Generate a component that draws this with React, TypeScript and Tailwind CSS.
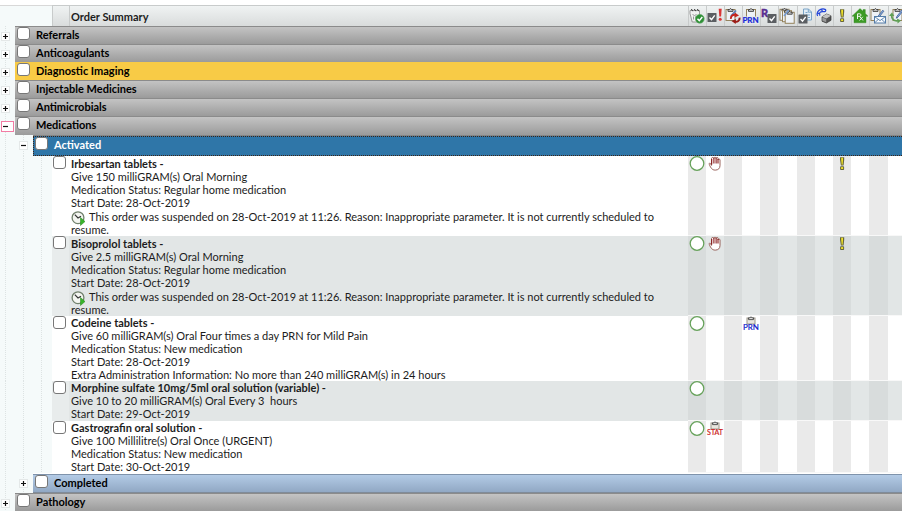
import React from 'react';

type Flag = 'verify' | 'hand' | 'prn' | 'stat' | 'alert';

interface Order {
  id: string;
  name: string;
  lines: string[];
  suspended?: string;
  flags: Partial<Record<number, Flag>>;
}

const SUSPENDED =
  'This order was suspended on 28-Oct-2019 at 11:26. Reason: Inappropriate parameter. It is not currently scheduled to resume.';

const ORDERS: Order[] = [
  {
    id: 'irbesartan',
    name: 'Irbesartan tablets -',
    lines: ['Give 150 milliGRAM(s) Oral Morning', 'Medication Status: Regular home medication', 'Start Date: 28-Oct-2019'],
    suspended: SUSPENDED,
    flags: { 0: 'verify', 1: 'hand', 8: 'alert' },
  },
  {
    id: 'bisoprolol',
    name: 'Bisoprolol tablets -',
    lines: ['Give 2.5 milliGRAM(s) Oral Morning', 'Medication Status: Regular home medication', 'Start Date: 28-Oct-2019'],
    suspended: SUSPENDED,
    flags: { 0: 'verify', 1: 'hand', 8: 'alert' },
  },
  {
    id: 'codeine',
    name: 'Codeine tablets -',
    lines: [
      'Give 60 milliGRAM(s) Oral Four times a day PRN for Mild Pain',
      'Medication Status: New medication',
      'Start Date: 28-Oct-2019',
      'Extra Administration Information: No more than 240 milliGRAM(s) in 24 hours',
    ],
    flags: { 0: 'verify', 3: 'prn' },
  },
  {
    id: 'morphine',
    name: 'Morphine sulfate 10mg/5ml oral solution (variable) -',
    lines: ['Give 10 to 20 milliGRAM(s) Oral Every 3\u00a0 hours', 'Start Date: 29-Oct-2019'],
    flags: { 0: 'verify' },
  },
  {
    id: 'gastrografin',
    name: 'Gastrografin oral solution -',
    lines: ['Give 100 Millilitre(s) Oral Once (URGENT)', 'Medication Status: New medication', 'Start Date: 30-Oct-2019'],
    flags: { 0: 'verify', 1: 'stat' },
  },
];

const Svg: React.FC<{ children: React.ReactNode }> = ({ children }) => (
  <svg viewBox="0 0 16 16" width="16" height="16" fill="none" className="block shrink-0 overflow-visible">
    {children}
  </svg>
);

const Clipboard = ({ x = 0, y = 0 }: { x?: number; y?: number }) => (
  <g transform={`translate(${x} ${y})`}>
    <rect x="0.5" y="1.5" width="9" height="11" fill="#eef2f7" stroke="#94825c" />
    <path d="M2.5 3.4V1.5H4L5 .4l1 1.1h1.5v1.9z" fill="#c9c9c9" stroke="#3c3c3c" strokeWidth=".9" />
  </g>
);

const Tick = ({ x, y }: { x: number; y: number }) => (
  <g transform={`translate(${x} ${y})`}>
    <rect width="9" height="9" rx=".6" fill="#5b5e62" />
    <path d="M2 4.6l2 2 3.2-4.2" stroke="#fff" strokeWidth="1.4" />
  </g>
);

const Pen = () => <path d="M12.8 2.2L8 8.2l-.8 2 1.8-1 4.8-6z" fill="#8fb0e0" stroke="#3c5d96" strokeWidth=".8" />;

const Bang = () => (
  <>
    <path d="M6 1.2h4.2v2.6L9.6 9.6H6.9L6 3.8z" fill="#66653a" />
    <path d="M7.2 1.8h1.8v2.2l-.4 4.8h-.9l-.5-4.8z" fill="#f0e228" />
    <rect x="6.1" y="10.3" width="4" height="3.7" rx=".8" fill="#66653a" />
    <rect x="7.1" y="11.1" width="2" height="1.9" fill="#f0e228" />
  </>
);

const HEADER_ICONS: { label: string; art: React.ReactNode }[] = [
  {
    label: 'Verification',
    art: (
      <>
        <path d="M1 2.5h9.5V14H3.2L1 5.5z" fill="#f1f1f1" stroke="#8e8e8e" strokeWidth=".9" />
        <path d="M2.4 1l1.3 2.2M5.4 1l1.3 2.2M8.4 1l1.3 2.2" stroke="#333" />
        <path d="M3.5 6l2 2 2-2M4.5 8.5v3M7 8v2" stroke="#999" />
        <circle cx="10.8" cy="10.8" r="4.4" fill="#2f9037" stroke="#58a65d" strokeWidth=".6" />
        <path d="M8.5 10.8l1.8 1.9 3-3.6" stroke="#fff" strokeWidth="1.5" />
      </>
    ),
  },
  {
    label: 'Priority',
    art: (
      <>
        <Tick x={0.5} y={5} />
        <path d="M11.7.8h3l-.6 7.6h-1.8z" fill="#d93636" />
        <circle cx="13.2" cy="11.2" r="1.5" fill="#d93636" />
      </>
    ),
  },
  {
    label: 'Renewal',
    art: (
      <>
        <Clipboard x={0.5} />
        <path d="M11 2.5L6 8.2" stroke="#5c82bd" strokeWidth="1.8" />
        <path d="M5.9 10.8c-.3-3 2.2-4.7 4.8-3.9" stroke="#c4241d" strokeWidth="2" />
        <path d="M9.8 4.4l4.2 3-4.4 2z" fill="#c4241d" />
        <path d="M14.6 9.6c.3 3-2.2 4.7-4.8 3.9" stroke="#9c1c17" strokeWidth="2" />
        <path d="M10.7 16l-4.2-3 4.4-2z" fill="#9c1c17" />
      </>
    ),
  },
  {
    label: 'PRN',
    art: (
      <>
        <Clipboard x={3} />
        <rect y="8.5" width="16" height="7.5" fill="#e4e7e7" />
        <text x="7.5" y="15" textAnchor="middle" fontSize="8" fontFamily="Lato, sans-serif" fill="#1527d8" stroke="#1527d8" strokeWidth=".2">
          PRN
        </text>
      </>
    ),
  },
  {
    label: 'Reconciliation',
    art: (
      <>
        <text x="0" y="9" fontSize="11" fontWeight="900" fontFamily="Lato, sans-serif" fill="#592f91" stroke="#592f91" strokeWidth=".4">
          R
        </text>
        <Tick x={6.5} y={6} />
      </>
    ),
  },
  {
    label: 'Order set',
    art: (
      <>
        <Clipboard x={0.5} y={-0.2} />
        <Clipboard x={3} y={1.2} />
        <Clipboard x={5.7} y={2.8} />
        <path d="M9.8 2L5 8" stroke="#7399d0" strokeWidth="1.6" />
      </>
    ),
  },
  {
    label: 'Documents',
    art: (
      <>
        <path d="M5.5 1h5l3 3v8h-8z" fill="#e2edf6" stroke="#7ba5c8" />
        <path d="M10.3 1v3.2h3.2M7.5 4.5h2M8 7h4M10 9.5h2" stroke="#7ba5c8" />
        <Tick x={0.5} y={6.5} />
      </>
    ),
  },
  {
    label: 'Dispensing',
    art: (
      <>
        <path d="M1.6 8C0 5.500 2 2.200 5.200 1.200c3.400-.8 5.400.7 4.200 2-1.300 1.200-3.600-.6-5.400 1.200-1 1-.6 2.200 0 3.200M2 5.200l2 1M5.600 1.400l.8 2" stroke="#2344d8" strokeWidth="1.3" />
        <path d="M6 8.800l4.600-2.800L15 7.800v4.500l-4.600 2.700L6 13.200z" fill="#555" stroke="#333" strokeWidth=".7" />
        <path d="M6 8.800l4.600-2.800L15 7.800l-4.600 2.700z" fill="#c4c4c4" />
        <path d="M6.400 9.600l3.800 1.400v3.300l-3.800-1.500z" fill="#999" />
      </>
    ),
  },
  { label: 'Alerts', art: <Bang /> },
  {
    label: 'Home medication',
    art: (
      <>
        <path d="M8 .6l3 2.7V1.6h2.3v3.9L16 8.2h-2v6.6H2V8.2H0z" fill="#3c9b25" stroke="#318020" strokeWidth=".4" />
        <path d="M5.5 11V5.8h2.2c1.8 0 1.8 2.5 0 2.5H5.5M7.5 8.3l3.5 4.2M10.8 8.8l-3.2 3.7" stroke="#fff" strokeWidth=".9" />
      </>
    ),
  },
  {
    label: 'Messages',
    art: (
      <>
        <Clipboard x={0.5} />
        <Pen />
        <rect x="4.5" y="8.5" width="11" height="6.5" fill="#f7fafd" stroke="#557da9" />
        <path d="M4.8 8.8L10 12.6l5.2-3.8M4.8 14.7l3.4-3.2M15.2 14.7l-3.4-3.2" stroke="#557da9" strokeWidth=".9" />
      </>
    ),
  },
  {
    label: 'Modify',
    art: (
      <>
        <Clipboard x={3.5} />
        <Pen />
        <path d="M2.6 7.2c-.4 4 2.6 6.2 6.2 5.6" stroke="#5fa055" strokeWidth="1.6" />
        <path d="M8 10.4l4 2.2-3.4 3z" fill="#5fa055" />
        <path d="M0 8l2.9-3.4L5.4 8z" fill="#5fa055" />
      </>
    ),
  },
];

const FlagIcon: React.FC<{ flag: Flag }> = ({ flag }) => {
  switch (flag) {
    case 'verify':
      return (
        <Svg>
          <circle cx="8" cy="7.5" r="6.8" fill="#fff" stroke="#67a25b" strokeWidth="1.3" />
        </Svg>
      );
    case 'hand':
      return (
        <Svg>
          <path
            d="M4.5 9.4L3.5 7.6c-.7-1.1-1.6-.3-1.2.8.7 2 1.6 3.3 2.4 4.2.8 1 2 1.5 3.6 1.5 3 0 4.700-1.800 4.700-4.600V4c0-1.300-1.900-1.300-1.900 0V2.400c0-1.300-2-1.300-2 0 0-1.600-2.200-1.600-2.200 0 0-1.300-2.400-1.300-2.400.2z"
            fill="#fff"
            stroke="#8d5048"
            strokeWidth=".9"
          />
          <path d="M6.900 2v5.400M9.100 2v5.400M11 3v4.600M4.700 3v5.600" stroke="#8a1c1c" strokeWidth="1.1" />
        </Svg>
      );
    case 'alert':
      return (
        <Svg>
          <Bang />
        </Svg>
      );
    default:
      return (
        <Svg>
          <rect x="4" y="2" width="8" height="6" fill="#e9e6df" stroke="#9a9589" />
          <path d="M5.5 3.6V1.8h1.4L8 .8l1.1 1h1.4v1.8z" fill="#ddd" stroke="#444" strokeWidth=".9" />
          <text
            x="8"
            y="14"
            textAnchor="middle"
            fontSize={flag === 'prn' ? 8 : 7}
            fontFamily="Lato, sans-serif"
            fill={flag === 'prn' ? '#1018cc' : '#cc2222'}
            stroke={flag === 'prn' ? '#1018cc' : '#cc2222'}
            strokeWidth=".2"
          >
            {flag === 'prn' ? 'PRN' : 'STAT'}
          </text>
        </Svg>
      );
  }
};

const SuspendedIcon = () => (
  <svg viewBox="0 0 15 15" width="15" height="15" fill="none" className="-my-[4px] mr-[3px] inline-block align-[-1px]">
    <circle cx="7" cy="6.7" r="5.9" fill="#f4f6f1" stroke="#71806c" strokeWidth="1.3" />
    <path d="M3.8 3.6L7 7l3-1.8" stroke="#333" strokeWidth="1.2" />
    <path d="M9.5 6.5l4.5 4-4.5 4z" fill="#37b52a" stroke="#24831c" strokeWidth=".5" />
  </svg>
);

const Check: React.FC<{ id: string; label?: string }> = ({ id, label }) => (
  <input
    id={id}
    type="checkbox"
    aria-label={label}
    className="m-0 block size-[13px] shrink-0 appearance-none rounded-[3px] border border-[#777] bg-white checked:bg-[#2f76a8]"
  />
);

const Toggle: React.FC<{ open?: boolean; focused?: boolean; label: string }> = ({ open, focused, label }) => (
  <button
    type="button"
    aria-expanded={!!open}
    aria-label={label}
    className={`flex items-center bg-white ${focused ? 'h-[11px] w-[13px] border border-[#f27ba3] pl-px' : 'size-[9px] justify-center border border-[#e4e8e8]'}`}
  >
    <svg viewBox="0 0 5 5" width="5" height="5" fill="none">
      <path d={open ? 'M0 2.5h5' : 'M0 2.5h5M2.5 0v5'} stroke="#111" strokeWidth="1.2" />
    </svg>
  </button>
);

// faint dotted tree lines running down the gutter cells
const ROOT_LINE =
  'bg-[#f5fafa] bg-[repeating-linear-gradient(#dde3e3_0_1px,transparent_1px_2px)] bg-[length:1px_2px] bg-[position:5px_0] bg-repeat-y';
const BRANCH_LINE =
  'bg-[#f5fafa] bg-[repeating-linear-gradient(#dde3e3_0_1px,transparent_1px_2px)] bg-[length:1px_2px] bg-[position:8px_0] bg-repeat-y';

const GREY_BAR = 'bg-linear-to-b from-[#c6c6c6] to-[#9b9b9b] shadow-[inset_0_1px_0_#8b8b8b] text-black';

const GroupRow: React.FC<{ name: string; open?: boolean; highlight?: boolean }> = ({ name, open, highlight }) => (
  <tr>
    <td className={`p-0 pt-[2px] pl-px align-middle ${ROOT_LINE}`}>
      <Toggle open={open} focused={open} label={name} />
    </td>
    <td colSpan={16} className="p-0">
      <div
        className={`flex items-start gap-[6px] pt-px pl-[2px] ${open ? 'h-[19px]' : 'h-[18px]'} ${highlight ? 'bg-[#f8cb46] text-black' : GREY_BAR}`}
      >
        <Check id={name} />
        <label htmlFor={name} className="font-bold leading-[15px]">
          {name}
        </label>
      </div>
    </td>
  </tr>
);

const SubgroupRow: React.FC<{ name: string; open?: boolean }> = ({ name, open }) => (
  <tr>
    <td className={ROOT_LINE} />
    <td className={`p-0 pl-[4px] align-middle ${BRANCH_LINE}`}>
      <Toggle open={open} label={name} />
    </td>
    <td colSpan={15} className={`p-0 pt-px ${open ? 'bg-[#858585]' : 'bg-white'}`}>
      <div
        className={`flex items-start gap-[6px] ${
          open
            ? 'h-[20px] border-y border-l border-dotted border-y-[#3d2416] border-l-[#3d2416] bg-[#2f76a8] pl-px text-white'
            : 'h-[19px] bg-linear-to-b from-[#b5cde8] to-[#8fa6c2] pt-px pl-[2px] text-black shadow-[inset_0_1px_0_#7f93ab,inset_0_-1px_0_#7f8b99]'
        }`}
      >
        <Check id={name} />
        <label htmlFor={name} className="font-bold leading-[15px]">
          {name}
        </label>
      </div>
    </td>
  </tr>
);

const OrderRow: React.FC<{ order: Order; alt: boolean }> = ({ order, alt }) => (
  <tr className={`h-[40px] align-top ${alt ? 'bg-[#e2e6e6]' : 'bg-white'}`}>
    <td className={ROOT_LINE} />
    <td className={BRANCH_LINE} />
    <td className={BRANCH_LINE} />
    <td className={`p-0 pl-px ${alt ? 'bg-[#e8ecec]' : ''}`}>
      <Check id={order.id} label={order.name} />
    </td>
    <td className={`p-0 pr-[20px] pl-[2px] leading-[13px] ${order.suspended ? 'pt-px' : ''}`}>
      <div className="font-bold">{order.name}</div>
      {order.lines.map((line) => (
        <div key={line}>{line}</div>
      ))}
      {order.suspended && (
        <div className="pt-px">
          <SuspendedIcon />
          {order.suspended}
        </div>
      )}
    </td>
    {HEADER_ICONS.map((col, i) => (
      <td
        key={col.label}
        className={`p-0 pl-px shadow-[inset_0_-1px_0_#f8f8f8] ${i % 2 ? '' : alt ? 'bg-[#d8dcdc]' : 'bg-[#eaeaea]'}`}
      >
        {order.flags[i] && <FlagIcon flag={order.flags[i]} />}
      </td>
    ))}
  </tr>
);

export default function App() {
  return (
    <main className="w-full overflow-hidden bg-white pt-[5px] font-['Lato','Noto_Sans',sans-serif] text-[11px] text-[#1c1c1c]">
      <table className="w-full table-fixed border-separate border-spacing-0 text-left">
        <colgroup>
          <col className="w-[15px]" />
          <col className="w-[18px]" />
          <col className="w-[19px]" />
          <col className="w-[17px]" />
          <col />
          <col className="w-[18px]" />
          <col className="w-[18px]" />
          <col className="w-[18px]" />
          <col className="w-[18px]" />
          <col className="w-[18px]" />
          <col className="w-[19px]" />
          <col className="w-[18px]" />
          <col className="w-[18px]" />
          <col className="w-[18px]" />
          <col className="w-[18px]" />
          <col className="w-[19px]" />
          <col className="w-[14px]" />
        </colgroup>
        <thead>
          <tr className="h-[21px] bg-linear-to-b from-[#f1f4f4] to-[#d9dcdc]">
            <td colSpan={3} className="border-t border-[#d8d8d8] bg-[#f5fafa] p-0" />
            <td className="border-t border-l border-[#c8cbcb] p-0" />
            <th scope="col" className="border-t border-l border-[#c8cbcb] p-0 pt-[2px] pl-px font-bold leading-[18px]">
              Order Summary
            </th>
            {HEADER_ICONS.map((col) => (
              <th key={col.label} scope="col" aria-label={col.label} className="border-t border-l border-[#c8cbcb] p-0">
                <Svg>{col.art}</Svg>
              </th>
            ))}
          </tr>
        </thead>
        <tbody>
          <GroupRow name="Referrals" />
          <GroupRow name="Anticoagulants" />
          <GroupRow name="Diagnostic Imaging" highlight />
          <GroupRow name="Injectable Medicines" />
          <GroupRow name="Antimicrobials" />
          <GroupRow name="Medications" open />
          <SubgroupRow name="Activated" open />
          {ORDERS.map((order, i) => (
            <OrderRow key={order.id} order={order} alt={i % 2 === 1} />
          ))}
          <SubgroupRow name="Completed" />
          <GroupRow name="Pathology" />
        </tbody>
      </table>
    </main>
  );
}
